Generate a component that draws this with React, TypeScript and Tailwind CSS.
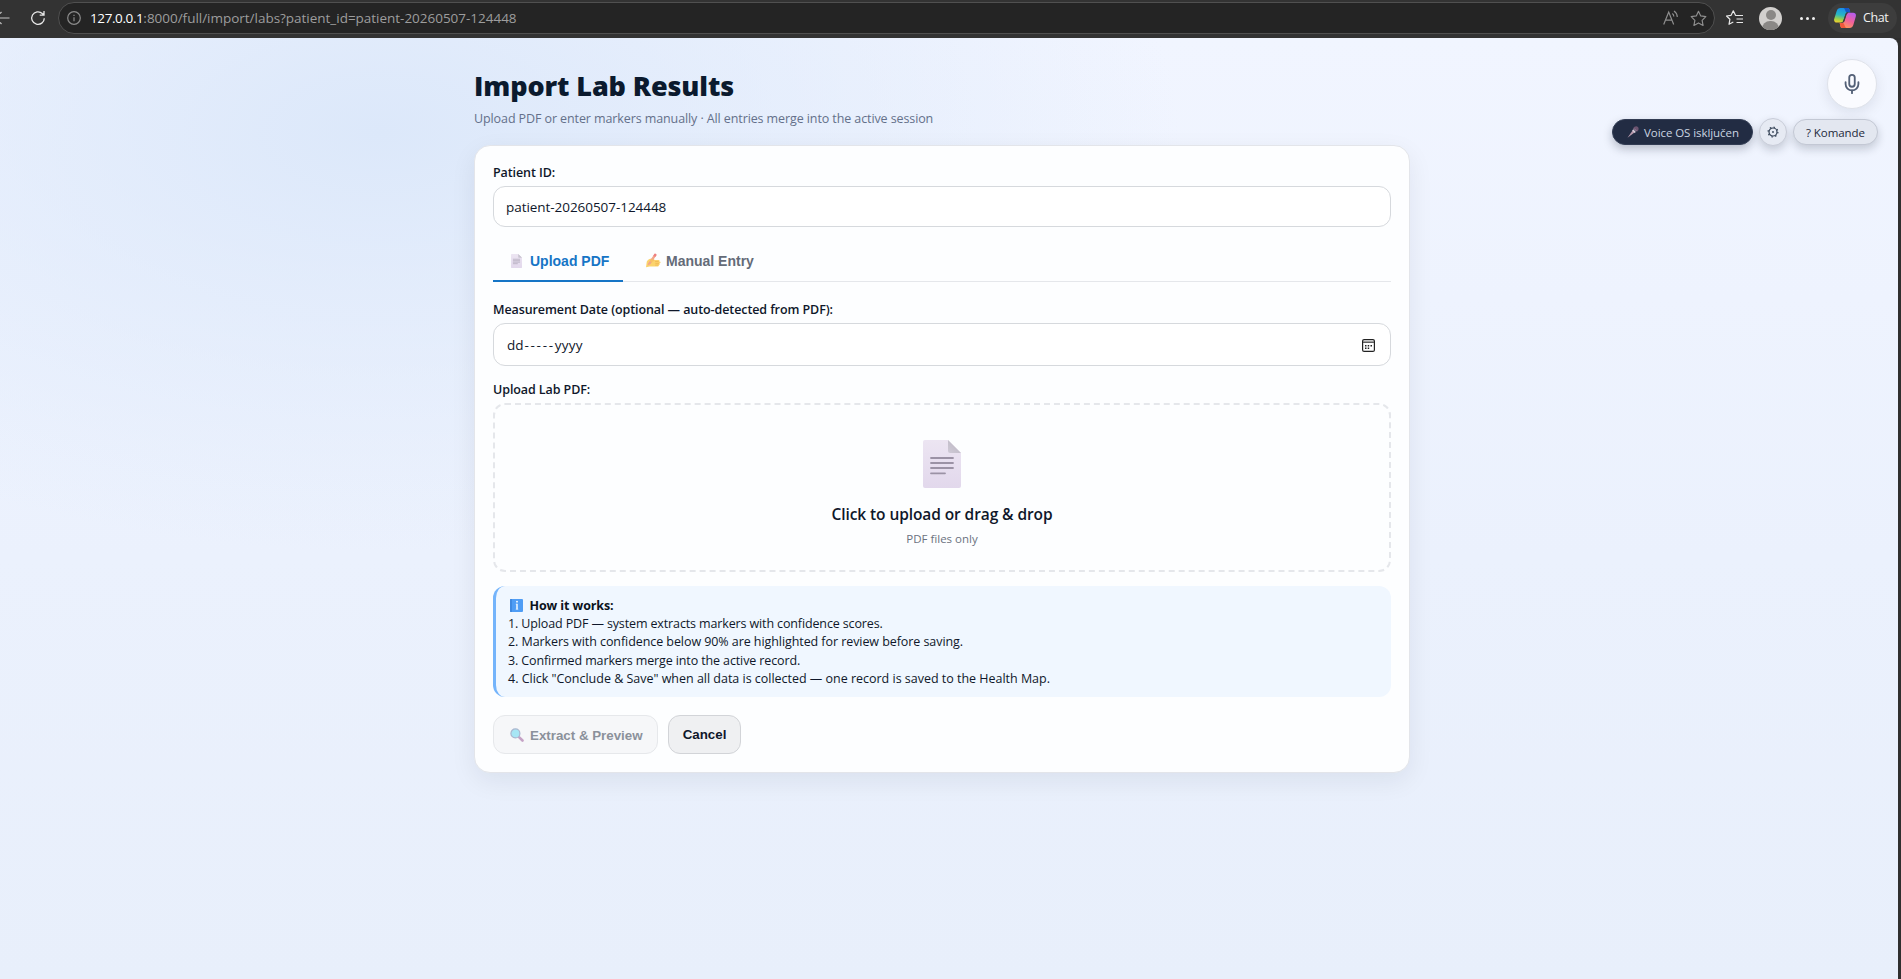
import { Mic } from "lucide-react";
import type { ReactNode } from "react";

function DocIcon({ className }: { className?: string }) {
  return (
    <svg viewBox="0 0 38 48" className={className}>
      <defs>
        <linearGradient id="sheet" x1="0" y1="0" x2="0" y2="1">
          <stop offset="0" stopColor="#ece5f2" />
          <stop offset="1" stopColor="#e2d8ec" />
        </linearGradient>
        <linearGradient id="fold" x1="0" y1="1" x2="1" y2="0">
          <stop offset="0" stopColor="#cfcad6" />
          <stop offset="1" stopColor="#b9b4c0" />
        </linearGradient>
      </defs>
      <path d="M2 0h23l13 13v33a2 2 0 0 1-2 2H2a2 2 0 0 1-2-2V2a2 2 0 0 1 2-2Z" fill="url(#sheet)" />
      <path d="M25 0l13 13H27a2 2 0 0 1-2-2Z" fill="url(#fold)" />
      <path d="M8 18h22M8 23h22M8 28h22M8 33.3h14" stroke="#9b92a5" strokeWidth="1.8" strokeLinecap="round" />
    </svg>
  );
}

function WritingHandIcon() {
  return (
    <svg viewBox="0 0 15 15" className="h-[15px] w-[15px]">
      <path d="M.8 8.5c1-1.8 3-2.7 5-2.9l3 1.4 3.8-.1c1.3 0 1.4 1.5.2 1.7h.9c1.2.2 1.1 1.7 0 1.8h-.5c.8.4.6 1.6-.4 1.700.3 1-.6 1.5-1.6 1.5H3.5L0 14.300Z" fill="#fbd36b" />
      <path d="M9 8.600l3.600-.1M9.400 10.400l3.600-.1M9.200 12.100l3.300-.1" stroke="#eeb04e" strokeWidth=".7" />
      <path d="M2 10.400 8.400 1c.6-.9 2.600.2 2 1.300L4.600 11l-3 1.600Z" fill="#f2a58c" />
      <path d="M8.200 1.200c.6-.9 2.800.2 2.100 1.400l-1 1.400-2-1.300Z" fill="#ee7f82" />
      <path d="M4 8.300c.6-1.600 2.500-2.300 4-1.800.8.600.2 1.400-.7 1.500-.8.200-1.300.8-1.700 1.700Z" fill="#f8c162" />
    </svg>
  );
}

function MagnifierIcon() {
  return (
    <svg viewBox="0 0 14 14" className="h-3.5 w-3.5">
      <path d="m9.300 9.300 3.200 3.200" stroke="#c5a3c6" strokeWidth="2.600" strokeLinecap="round" />
      <circle cx="5.400" cy="5.400" r="4.500" fill="#a7e6f5" stroke="#a9b6cf" strokeWidth="1.200" />
    </svg>
  );
}

function MicrophoneIcon() {
  return (
    <svg viewBox="0 0 12 12" className="h-3 w-3">
      <path d="M.5 11.700 6.300 3.600l2.200 2.200Z" fill="#b99aae" />
      <path d="m5.200 4.400 2.500 2.500 1.100-1L6.200 3.300Z" fill="#d8cfdd" />
      <path d="M6.200 2.300c1-2 3.400-2.600 4.700-1.300s.8 3.700-1.200 4.800Z" fill="#6c5470" />
      <path d="M7 2.500 9.400 5" stroke="#a58ca8" strokeWidth=".9" />
    </svg>
  );
}

function InfoEmoji() {
  return (
    <svg viewBox="0 0 13 13" className="h-[13px] w-[13px]">
      <rect width="13" height="13" rx="1" fill="#4f9df5" />
      <path d="M1 0v13" stroke="#3a83da" strokeWidth="1.500" />
      <path d="M7 4.800v5.600" fill="none" stroke="#fff" strokeWidth="1.400" />
      <path d="M5.700 5.200H7M5.700 10.200h2.600" stroke="#fff" strokeOpacity=".6" strokeWidth=".8" />
      <circle cx="7" cy="2.700" r=".9" fill="#fff" />
    </svg>
  );
}

function CopilotIcon() {
  return (
    <svg viewBox="0 0 22 20" className="h-5 w-[22px]">
      <defs>
        <linearGradient id="cpA" x1=".4" y1="0" x2=".2" y2="1">
          <stop offset="0" stopColor="#1a8fe8" />
          <stop offset=".45" stopColor="#27b5c4" />
          <stop offset=".75" stopColor="#9ad04a" />
          <stop offset="1" stopColor="#f6d02c" />
        </linearGradient>
        <linearGradient id="cpB" x1=".8" y1="0" x2=".3" y2="1">
          <stop offset="0" stopColor="#b45cf0" />
          <stop offset=".5" stopColor="#f0609c" />
          <stop offset="1" stopColor="#ff9a55" />
        </linearGradient>
      </defs>
      <path d="M10.500 0h3c1 0 1.600.6 2 1.600l.8 2.700h-2.500c-1.300 0-2 .9-2.400 2.100l-2 6.200c-.4 1.300-1.200 2-2.500 2H2.800C.6 14.600-.3 13 .2 11L2.600 3.300C3.300 1.100 4.600 0 6.500 0Z" fill="url(#cpA)" />
      <path d="M9.300 0h4.200c1 0 1.600.6 2 1.600l.8 2.700h-2.600c-1.500 0-2-.5-2.400-1.600C10.900 1.300 10.400.3 9.300 0Z" fill="#1557c8" />
      <path d="M11.500 20h-3c-1 0-1.600-.6-2-1.600l-.8-3.400h2.200c1.300 0 2-.7 2.400-2l2-6.200c.4-1.300 1.200-2 2.500-2h4.400c2.200 0 3.100 1.600 2.600 3.600l-2.400 8.300c-.7 2.200-2 3.300-3.900 3.300Z" fill="url(#cpB)" />
      <path d="M12.700 20H8.500c-1 0-1.600-.6-2-1.600L5.700 15h2.300c1.500 0 2 .5 2.400 1.900.4 1.600 1.200 2.800 2.300 3.100Z" fill="#f0583c" />
      <path d="M9.200 13.800c.5-.4.700-1 .9-1.600l1.800-5.600c.4-1.300 1-1.900 1.900-2" fill="none" stroke="#3d3d3d" strokeWidth="1.300" />
    </svg>
  );
}

const STAR = "M8 1.200 10.100 5.600 14.900 6.300 11.400 9.700 12.300 14.500 8 12.200 3.700 14.500 4.600 9.700 1.100 6.300 5.900 5.600Z";

function BrowserBar() {
  return (
    <div className="flex h-[38px] items-center bg-[#333333] pb-[2px] text-[#e6e6e6]">
      <svg viewBox="0 0 10 14" className="h-3.5 w-2.5 fill-none">
        <path d="M0 7h9.500" stroke="#9d9d9d" strokeWidth="1.400" />
        <path d="M0 2.500 1.500 1M0 11.500 1.500 13" stroke="#c8c8c8" strokeWidth="1.200" />
      </svg>
      <svg viewBox="0 0 16 16" className="ml-5 h-4 w-4 fill-none stroke-[#e8e8e8]" strokeWidth="1.300">
        <path d="M14.300 8.200A6.300 6.300 0 1 1 12.300 3.500L14 5M14 1v4.200H9.700" />
      </svg>
      <div className="ml-3 flex h-8 w-[1657px] items-center rounded-full border border-[#505050] bg-[#242424] pl-2 pr-[7px]">
        <svg viewBox="0 0 14 14" className="h-3.5 w-3.5 fill-none stroke-[#8c8c8c]" strokeWidth="1.200">
          <circle cx="7" cy="7" r="6.300" />
          <path d="M7 6.200v4M7 3.700v1.400" />
        </svg>
        <p className="ml-[9px] whitespace-pre text-[13.5px] leading-5">
          <span className="tracking-[-0.4px] text-white">127.0.0.1</span>
          <span className="tracking-[-0.02px] text-[#9d9d9d]">:8000/full/import/labs?patient_id=patient-20260507-124448</span>
        </p>
        <svg viewBox="0 0 16 16" className="ml-auto h-4 w-4 fill-none stroke-[#8f8f8f]" strokeWidth="1.200">
          <path d="M.7 14.500 5.700 2l5 12.500M2.500 10.200h6.400M9.300 3.500c1 .7 1.500 1.700 1.500 3M11 1c2 1.300 3.200 3.200 3.300 6" />
        </svg>
        <svg viewBox="0 0 16 16" className="ml-[11px] h-[17px] w-[17px] fill-none stroke-[#8f8f8f]" strokeWidth="1.100" strokeLinejoin="round">
          <path d={STAR} />
        </svg>
      </div>
      <svg viewBox="0 0 18 16" className="ml-[11px] h-4 w-[18px] fill-none stroke-[#e8e8e8]" strokeWidth="1.200" strokeLinejoin="round">
        <path d="M11 5.500 9.500 5.300 7.300.8 5.100 5.300.5 6 3.900 9.300 3 14.300 7.300 12" />
        <path d="M11 5.500h6M10.500 9h6.500M10.500 12.500h6.500" />
      </svg>
      <div className="relative ml-[15px] flex h-[23px] w-[23px] justify-center overflow-hidden rounded-full bg-[#d2d0ce]">
        <span className="absolute top-[3px] h-2.5 w-2.5 rounded-full bg-[#8a8886]" />
        <span className="absolute top-[14px] h-4 w-[17px] rounded-t-lg bg-[#8a8886]" />
      </div>
      <div className="ml-[18px] flex gap-[2px]">
        <span className="h-[3px] w-[3px] rounded-full bg-[#f0f0f0]" />
        <span className="ml-px h-[3px] w-[3px] rounded-full bg-[#f0f0f0]" />
        <span className="ml-px h-[3px] w-[3px] rounded-full bg-[#f0f0f0]" />
      </div>
      <div className="ml-[13px] flex h-[30px] w-[69px] items-center rounded-full bg-[#3d3d3d] pl-1.5">
        <CopilotIcon />
        <span className="ml-[7px] text-[12.5px] leading-5 tracking-[-0.4px] text-[#f2f2f2]">Chat</span>
      </div>
    </div>
  );
}

function Label({ children }: { children: ReactNode }) {
  return <p className="pt-px text-[12.5px] font-semibold leading-5 tracking-[-0.09px]">{children}</p>;
}

function VoiceControls() {
  return (
    <div className="absolute right-5 top-[21px] flex flex-col items-end">
      <div className="mr-px flex h-[50px] w-[50px] items-center justify-center rounded-full border border-[#dfe2ea] bg-[#fafbff] shadow-[0_4px_14px_rgba(15,23,42,0.09)]">
        <Mic className="h-[22px] w-[22px] text-[#536077]" strokeWidth={2} />
      </div>
      <div className="mt-[9px] flex items-center gap-1.5 text-[11.5px]">
        <div className="flex h-[26px] w-[141px] items-center rounded-full border border-[#323c53] bg-[#222c43] pl-3.5 tracking-[-0.07px] text-[#cbd5e1] shadow-[0_4px_10px_rgba(15,23,42,0.25)]">
          <MicrophoneIcon />
          <span className="ml-[5px] pt-px">Voice OS isključen</span>
        </div>
        <div className="flex h-7 w-7 items-center justify-center rounded-full border border-[#c9cdd9] bg-[#e6eaf3] shadow-[0_4px_10px_rgba(15,23,42,0.2)]">
          <svg viewBox="0 0 12 12" className="h-3 w-3 fill-none stroke-[#334155]">
            <circle cx="6" cy="6" r="4" strokeWidth="1.200" />
            <circle cx="6" cy="6" r="4.900" strokeWidth="1.200" strokeDasharray="1.400 2.448" />
            <circle cx="6" cy="6" r=".9" fill="#334155" stroke="none" />
          </svg>
        </div>
        <div className="flex h-[26px] w-[85px] items-center justify-center rounded-full border border-[#c3c8d4] bg-[#e3e7f0] pt-px tracking-[-0.05px] text-[#1e293b] shadow-[0_4px_10px_rgba(15,23,42,0.2)]">
          ? Komande
        </div>
      </div>
    </div>
  );
}

const steps = [
  { text: "1. Upload PDF — system extracts markers with confidence scores.", spacing: "tracking-[-0.13px]" },
  { text: "2. Markers with confidence below 90% are highlighted for review before saving.", spacing: "tracking-[-0.07px]" },
  { text: "3. Confirmed markers merge into the active record.", spacing: "tracking-[-0.12px]" },
  { text: '4. Click "Conclude & Save" when all data is collected — one record is saved to the Health Map.', spacing: "tracking-[-0.015px]" },
];

export default function App() {
  return (
    <div className="h-[979px] w-full overflow-hidden bg-[#2f2f2f] font-['Open_Sans','Noto_Sans',sans-serif] text-[#0f172a]">
      <BrowserBar />
      <div className="relative h-[941px] w-[1898px] rounded-tr-lg bg-[radial-gradient(ellipse_800px_420px_at_20%_10%,#dce8fa_0%,rgba(220,232,250,0)_100%),linear-gradient(180deg,#f1f5ff_0%,#ebf1fd_55%,#e8effb_100%)]">
        <VoiceControls />
        <main className="ml-[474px] w-[936px] pt-[31px]">
          <h1 className="text-[27px] font-extrabold leading-[34px] tracking-[-0.11px] text-[#0b1a2e]">Import Lab Results</h1>
          <p className="mt-1.5 text-[12.5px] leading-5 tracking-[-0.1px] text-[#64708a]">
            Upload PDF or enter markers manually · All entries merge into the active session
          </p>

          <section className="mt-4 h-[627.5px] rounded-2xl border border-[#e3e5ea] bg-[#fdfeff] px-[18px] pt-4 shadow-[0_8px_26px_rgba(15,23,42,0.07)]">
            <Label>Patient ID:</Label>
            <div className="mt-[3px] flex h-[41px] items-center rounded-xl border border-[#d6d9dd] bg-white pl-3 pt-px text-[13.5px] tracking-[-0.05px]">
              patient-20260507-124448
            </div>

            <div className="mt-[13px] flex h-[42px] border-b border-[#e5e7eb] font-['Liberation_Sans',sans-serif] text-sm font-bold leading-5">
              <div className="-mb-px flex w-[130px] items-start border-b-2 border-[#1675c6] pl-[18px] pt-[11px] text-[#1675c6]">
                <DocIcon className="mt-[3px] h-3.5 w-[11px]" />
                <span className="ml-2">Upload PDF</span>
              </div>
              <div className="flex items-start pl-[23px] pt-[11px] text-[#646b78]">
                <span className="mt-[2px]"><WritingHandIcon /></span>
                <span className="ml-[5px]">Manual Entry</span>
              </div>
            </div>

            <div className="mt-[17px]">
              <Label>Measurement Date (optional — auto-detected from PDF):</Label>
            </div>
            <div className="mt-[3px] flex h-[43px] items-center rounded-xl border border-[#d6d9dd] bg-white pl-[13px] pr-[15px] pt-px text-[13.5px]">
              <span>dd</span>
              <span className="ml-px tracking-[1.7px]">-----</span>
              <span className="tracking-[0.2px]">yyyy</span>
              <svg viewBox="0 0 13 13" className="ml-auto h-[13px] w-[13px]">
                <rect x=".6" y=".6" width="11.800" height="11.800" rx="1.500" fill="none" stroke="#222" strokeWidth="1.200" />
                <path d="M1 3.200h11" stroke="#555" strokeWidth="1.500" />
                <path d="M3 6.700h1.500M5.700 6.700h1.500M8.500 6.700H10M3 9.300h1.500M5.700 9.300h1.500" stroke="#222" strokeWidth="1.400" />
              </svg>
            </div>

            <div className="mt-[13px]">
              <Label>Upload Lab PDF:</Label>
            </div>
            <div className="mt-[3px] flex h-[169px] flex-col items-center rounded-xl border-2 border-dashed border-[#e5e7eb] pt-[35px]">
              <DocIcon className="h-12 w-[38px]" />
              <p className="mt-[15px] text-[15.5px] font-semibold leading-[22px] tracking-[-0.09px]">Click to upload or drag &amp; drop</p>
              <p className="mt-[5px] text-[11.5px] leading-[18px] text-[#6b7280]">PDF files only</p>
            </div>

            <div className="mt-3.5 h-[111px] rounded-xl border-l-[3px] border-[#74b4fb] bg-[#f0f7ff] pl-3 pt-[10.5px] text-[12.5px] leading-[18.4px]">
              <div className="flex items-center pl-[2px]">
                <InfoEmoji />
                <b className="ml-[6.5px] tracking-[-0.1px] text-[#0b1220]">How it works:</b>
              </div>
              {steps.map((step) => (
                <p key={step.text} className={step.spacing}>{step.text}</p>
              ))}
            </div>

            <div className="mt-[18px] flex gap-2.5 font-['Liberation_Sans',sans-serif] text-[13.33px] font-bold">
              <div className="flex h-[39px] w-[165px] items-center rounded-xl border border-[#e6e8eb] bg-[#f6f7f9] pl-4 text-[#8b919b]">
                <MagnifierIcon />
                <span className="ml-1.5 mt-[2px]">Extract &amp; Preview</span>
              </div>
              <div className="flex h-[39px] w-[73px] items-center justify-center rounded-xl border border-[#d2d4d8] bg-[#eff0f2]">Cancel</div>
            </div>
          </section>
        </main>
      </div>
    </div>
  );
}
